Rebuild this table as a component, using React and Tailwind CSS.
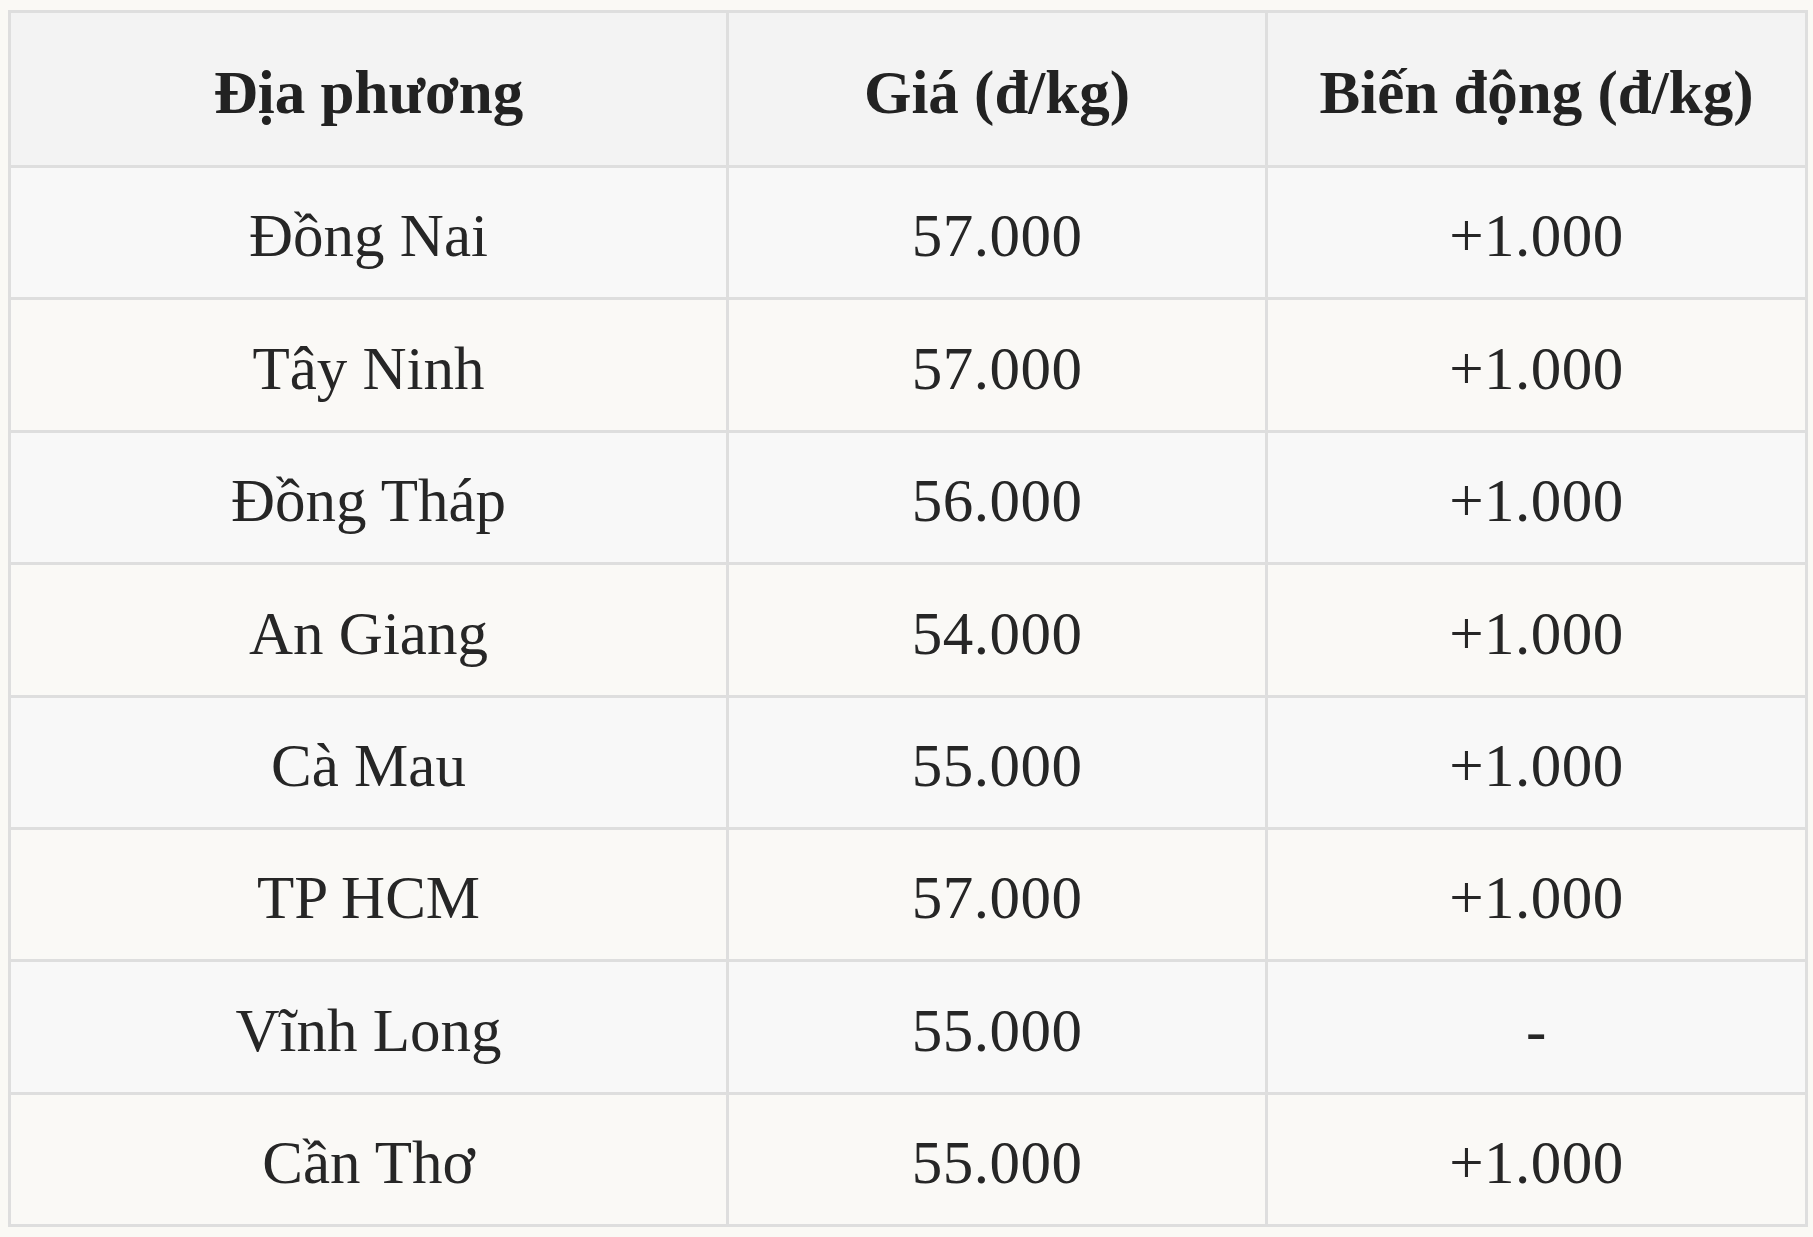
import React from "react";

const rows = [
  ["Đồng Nai", "57.000", "+1.000"],
  ["Tây Ninh", "57.000", "+1.000"],
  ["Đồng Tháp", "56.000", "+1.000"],
  ["An Giang", "54.000", "+1.000"],
  ["Cà Mau", "55.000", "+1.000"],
  ["TP HCM", "57.000", "+1.000"],
  ["Vĩnh Long", "55.000", "-"],
  ["Cần Thơ", "55.000", "+1.000"],
];

export default function App() {
  return (
    <div
      className="min-h-[1237px] w-[1813px] bg-[#faf9f5] pl-[8px] pt-[10px]"
      style={{ fontFamily: '"Liberation Serif", "DejaVu Serif", serif' }}
    >
      <div className="grid w-[1800px] grid-cols-[715px_536px_1fr] gap-[3px] bg-[#dedede] p-[3px] text-[#222222]">
        {["Địa phương", "Giá (đ/kg)", "Biến động (đ/kg)"].map((h) => (
          <div
            key={h}
            className="flex h-[152px] items-center justify-center bg-[#f3f3f3] pt-[8px] text-[61px] font-bold"
          >
            {h}
          </div>
        ))}
        {rows.map((r, i) =>
          r.map((c, j) => (
            <div
              key={i + "-" + j}
              className={
                "flex h-[129.4px] items-center justify-center pt-[7px] text-[61px] text-[#262626] " +
                (i % 2 === 0 ? "bg-[#f8f8f8]" : "bg-[#faf9f6]") +
                (j > 0 ? " tracking-[0.5px]" : "")
              }
            >
              {c}
            </div>
          ))
        )}
      </div>
    </div>
  );
}
